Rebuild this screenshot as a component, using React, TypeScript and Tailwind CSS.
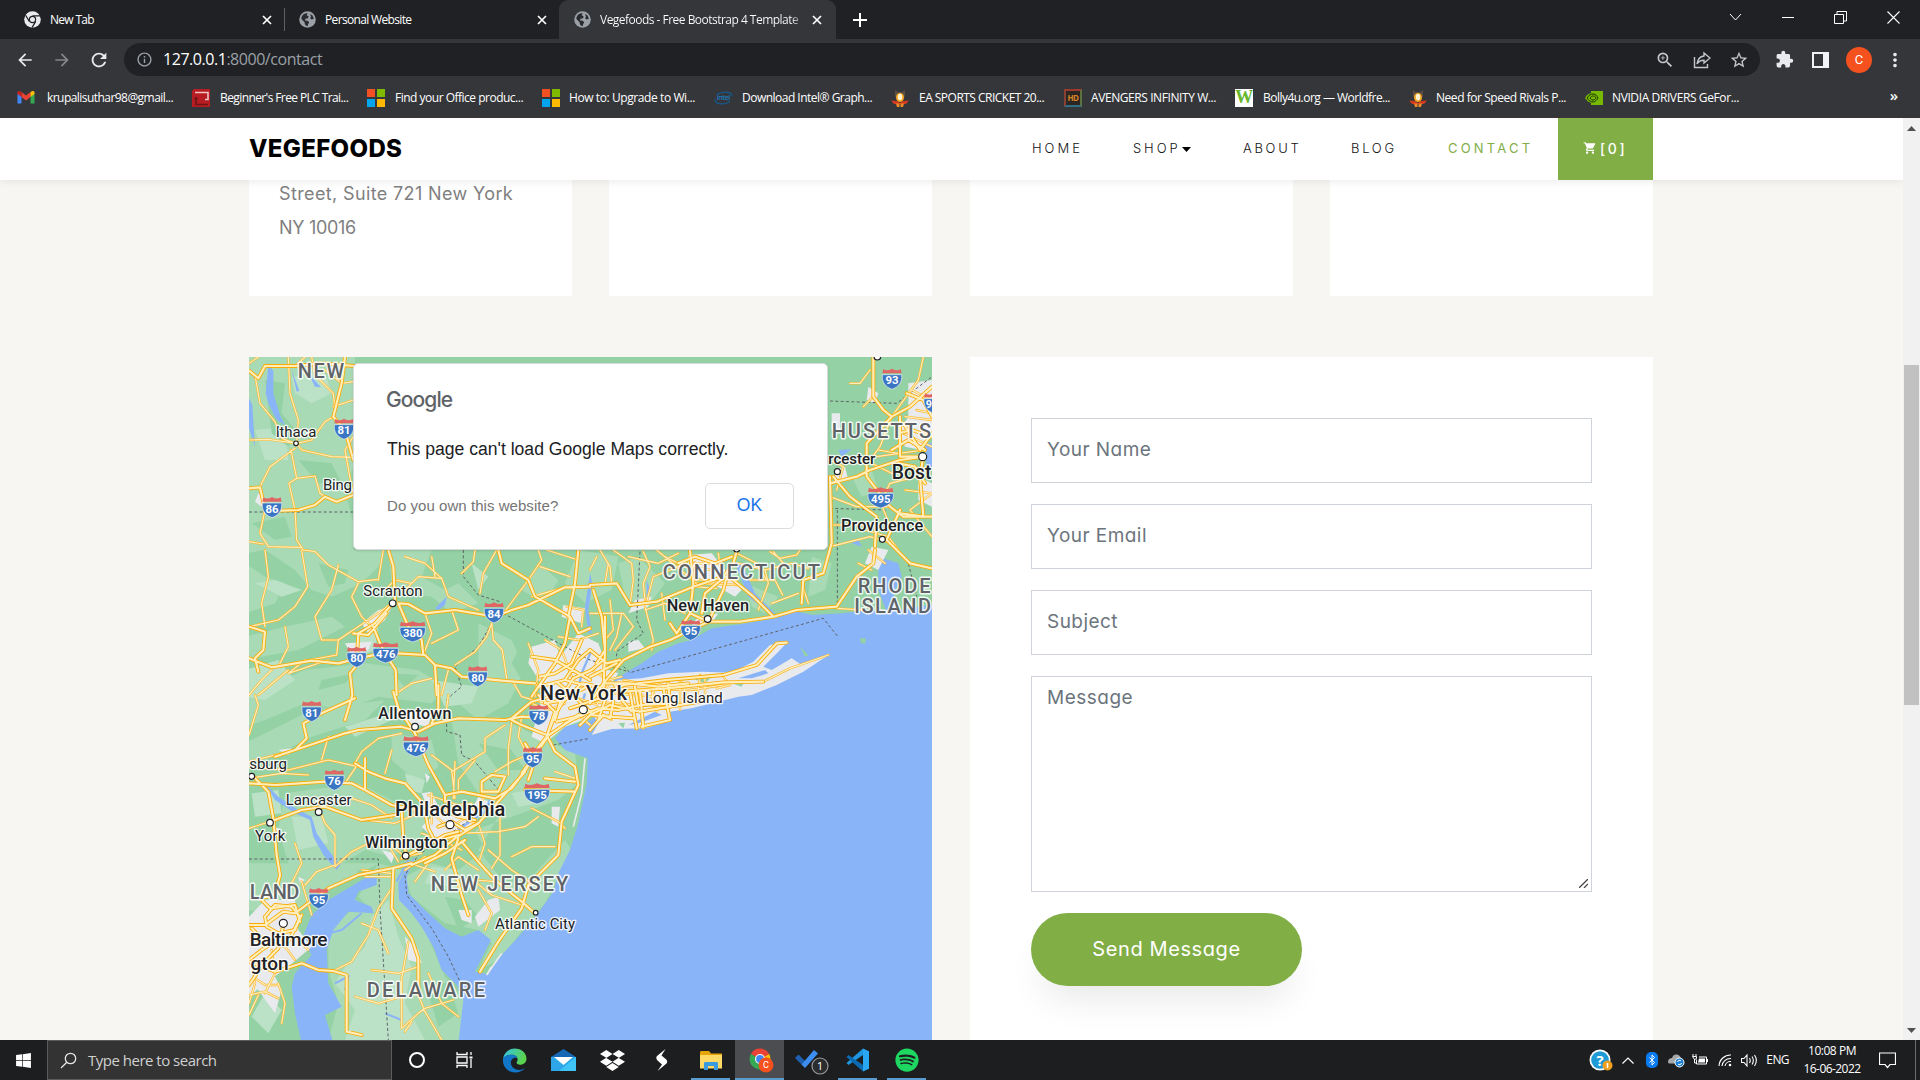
import type { ReactNode } from 'react';
import {
  MdArrowBack,
  MdArrowForward,
  MdExtension,
  MdMoreVert,
  MdOutlineInfo,
  MdRefresh,
  MdShoppingCart,
  MdStarBorder,
  MdZoomIn,
} from 'react-icons/md';
import { FaDropbox, FaSpotify, FaWindows } from 'react-icons/fa';

/* ---------- shared icons ---------- */

function Globe() {
  return (
    <svg viewBox="0 0 17 17" className="size-[17px] shrink-0">
      <circle cx="8.5" cy="8.5" r="8.3" fill="#9aa0a6" />
      <path
        d="M3 5.2C4 3 6 2 8.6 2.2L7.8 4.4l1.8.8-.6 2-2.6.6-.4 1.6 2.8.4 1.4 1.6-1 1.6-.6 2.2c-2-.2-3-2-3-4L3.4 9 2.2 7.4zM11 3l2.6 1.6 1.2 3.2-2 .8-1.6-1.2.8-1.8z"
        fill="#292b2f"
      />
    </svg>
  );
}

function ChromeMono() {
  return (
    <svg viewBox="0 0 17 17" className="size-[17px] shrink-0">
      <circle cx="8.5" cy="8.5" r="8.3" fill="#e8eaed" />
      <circle cx="8.5" cy="8.5" r="3.7" fill="#202124" />
      <circle cx="8.5" cy="8.5" r="2.5" fill="#e8eaed" />
      <path d="M8.5 4.8H16M5.3 10.4 1.6 4.2M11.7 10.4 8 16.6" stroke="#202124" strokeWidth="1.2" />
    </svg>
  );
}

function Cross() {
  return (
    <svg viewBox="0 0 10 10" className="size-[10px] shrink-0">
      <path d="M1 1l8 8M9 1L1 9" stroke="#fff" strokeWidth="1.7" />
    </svg>
  );
}

function Gmail() {
  return (
    <svg viewBox="0 0 18 14" className="h-[15px] w-[18px]">
      <path d="M0.5 13V2.5L4.5 5.5V13z" fill="#4285f4" />
      <path d="M13.5 13V5.5l4-3V13z" fill="#34a853" />
      <path d="M4.5 1.5 9 5l4.5-3.5v5L9 10 4.5 6.5z" fill="#ea4335" />
      <path d="M.5 3.4V2C.5.6 2.2-.2 4.5 1.5v5z" fill="#c5221f" />
      <path d="M17.5 3.4V2c0-1.4-1.7-2.2-4-.5v5z" fill="#fbbc04" />
    </svg>
  );
}

function Plc() {
  return (
    <svg viewBox="0 0 18 18" className="size-[18px]">
      <path d="M2 0h16v18H0V2z" fill="#b71c22" />
      <path d="M3 3.5h13v7h-3" stroke="#efc4c4" strokeWidth="1.6" fill="none" />
      <path d="M4 9.500v6h12" stroke="#6d1416" strokeWidth="1.600" fill="none" />
      <circle cx="4" cy="9.500" r="1.600" fill="#6d1416" />
    </svg>
  );
}

function Microsoft() {
  return (
    <span className="grid size-[18px] grid-cols-2 gap-[2px]">
      <i className="bg-[#f25022]" />
      <i className="bg-[#7fba00]" />
      <i className="bg-[#00a4ef]" />
      <i className="bg-[#ffb900]" />
    </span>
  );
}

function Intel() {
  return (
    <svg viewBox="0 0 20 14" className="h-[14px] w-[19px]">
      <path d="M3 3.500C8-.5 19-.5 19 5.500M17 10C12 14.500 1 14.500 1 8" fill="none" stroke="#14588f" strokeWidth="1.300" />
      <text x="9.800" y="9.600" fontSize="7.500" fontWeight="600" textAnchor="middle" fill="#1b7cc0" fontFamily="Open Sans">
        intel
      </text>
    </svg>
  );
}

function Chef() {
  return (
    <svg viewBox="0 0 18 18" className="size-[18px]">
      <path d="M4 1l3 2h4l3-2v7H4z" fill="#5a4d42" />
      <ellipse cx="9" cy="8.5" rx="4" ry="4.6" fill="#f5a623" />
      <ellipse cx="9" cy="8" rx="2.2" ry="3.2" fill="#fff3d0" />
      <path d="M0 11.500l6 .5 3 2 3-2 6-.5-3 3.500H3z" fill="#d23b1e" />
      <path d="M5 14.500h3.500V18H6zM9.500 14.500H13L12 18H9.500z" fill="#f08a24" />
    </svg>
  );
}

function Hd() {
  return (
    <span className="flex size-[18px] items-center justify-center border-2 border-t-[#9c3b2d] border-r-[#5c7340] border-b-[#2f6f86] border-l-[#8b4034] bg-[#2c2622] text-[8px] font-bold text-[#d98324]">
      HD
    </span>
  );
}

function Bolly() {
  return (
    <span className="flex size-[18px] items-center justify-center overflow-hidden bg-white font-['Liberation_Serif',serif] text-[18px] font-bold text-[#67b72c]">
      W
    </span>
  );
}

function Nvidia() {
  return (
    <svg viewBox="0 0 18 14" className="h-[14px] w-[18px]">
      <path d="M6 0h12v14H6z" fill="#76b900" />
      <path d="M0 7c2-4 5-5 8-5 4 0 6 3 7 5-2 3-4 5-7 5-4 0-6-2-8-5z" fill="#76b900" />
      <path
        d="M2 7c2-3 4-4 6-4 3 0 4 2 5 4-1 2-3 4-5 4S4 10 2 7zm3 0c1-1.500 2-2 3.500-2 1.500 0 2 1 2.500 2-1 1.200-1.500 2-3 2S6 8.500 5 7z"
        fill="none"
        stroke="#1f3300"
        strokeWidth="1"
      />
    </svg>
  );
}

/* ---------- browser chrome ---------- */

function TabStrip() {
  return (
    <div className="flex h-[39px] bg-[#202124] text-[12px] text-white">
      <div className="flex w-[284px] items-center pl-6">
        <ChromeMono />
        <span className="ml-[9px] w-[212px] tracking-[-0.7px]">New Tab</span>
        <Cross />
      </div>
      <div className="flex w-[275px] items-center">
        <i className="h-[23px] w-px bg-[#5f6165]" />
        <span className="ml-[14px] flex">
          <Globe />
        </span>
        <span className="ml-[9px] w-[212px] tracking-[-0.66px]">Personal Website</span>
        <Cross />
      </div>
      <div className="flex w-[277px] items-center rounded-t-[9px] bg-[#35363a] pl-[15px]">
        <Globe />
        <span className="ml-[9px] w-[212px] bg-gradient-to-r from-white from-90% to-[#55565a] to-96% bg-clip-text tracking-[-0.52px] whitespace-nowrap text-transparent">
          Vegefoods - Free Bootstrap 4 Template
        </span>
        <Cross />
      </div>
      <div className="flex items-center pl-[17px]">
        <svg viewBox="0 0 14 14" className="size-[14px]">
          <path d="M7 0v14M0 7h14" stroke="#fff" strokeWidth="2" />
        </svg>
      </div>
      <div className="ml-auto flex h-[34px] items-center gap-10 pr-5">
        <svg viewBox="0 0 13 8" className="h-[8px] w-[13px]">
          <path d="M1 1l5.5 6L12 1" stroke="#fff" fill="none" />
        </svg>
        <i className="h-px w-3 bg-white" />
        <svg viewBox="0 0 13 13" className="size-[13px]">
          <path d="M.5 3.5h9v9h-9zM3 3V.5h9.5v9.5H10" stroke="#fff" fill="none" />
        </svg>
        <svg viewBox="0 0 13 13" className="size-[13px]">
          <path d="M.5.5l12 12M12.5.5l-12 12" stroke="#fff" strokeWidth="1.1" />
        </svg>
      </div>
    </div>
  );
}

function Toolbar() {
  return (
    <div className="flex h-[41px] items-center bg-[#35363a] text-[#e8eaed]">
      <div className="flex w-[124px] items-center pl-[15px]">
        <MdArrowBack className="size-[20px]" />
        <MdArrowForward className="ml-[17px] size-[20px] text-[#85878a]" />
        <MdRefresh className="ml-[16px] size-[22px]" />
      </div>
      <div className="flex h-[33px] w-[1636px] items-center rounded-full bg-[#202124] pr-[11px] pl-[12px]">
        <MdOutlineInfo className="size-[17px] text-[#9aa0a6]" />
        <span className="ml-[10px] pb-px text-[16px] tracking-[-0.46px] text-[#9aa0a6]">
          <span className="text-white">127.0.0.1</span>:8000/contact
        </span>
        <span className="ml-auto flex items-center gap-[18px] text-[#c4c7cb]">
          <MdZoomIn className="size-[20px]" />
          <svg viewBox="0 0 18 18" className="size-[18px]" fill="none" stroke="currentColor" strokeWidth="1.4">
            <path d="M1.500 6v10.500h13V13" />
            <path d="M11 2l6 5-6 5V9.300C7.500 9.300 5.500 10.500 4 13c.5-4 3-7.500 7-8z" />
          </svg>
          <MdStarBorder className="size-[20px]" />
        </span>
      </div>
      <MdExtension className="ml-[15px] size-[19px]" />
      <svg viewBox="0 0 17 16" className="ml-[18px] h-[16px] w-[17px]">
        <path d="M1 1h15v14H1z" fill="none" stroke="#f1f3f4" strokeWidth="2" />
        <path d="M11 1h5v14h-5z" fill="#f1f3f4" />
      </svg>
      <span className="ml-[17px] flex size-[26px] items-center justify-center rounded-full bg-[#f4511e] font-['Roboto',sans-serif] text-[13px] text-white">
        C
      </span>
      <MdMoreVert className="ml-[12px] size-[22px]" />
    </div>
  );
}

type Bookmark = { label: string; icon: ReactNode; box: string };

const bookmarks: Bookmark[] = [
  { label: 'krupalisuthar98@gmail...', icon: <Gmail />, box: 'w-[175px] gap-3 tracking-[-0.55px]' },
  { label: "Beginner's Free PLC Trai...", icon: <Plc />, box: 'w-[175px] gap-[10px] tracking-[-0.6px]' },
  { label: 'Find your Office produc...', icon: <Microsoft />, box: 'w-[175px] gap-[10px] tracking-[-0.5px]' },
  { label: 'How to: Upgrade to Wi...', icon: <Microsoft />, box: 'w-[172px] gap-[9px] tracking-[-0.41px]' },
  { label: 'Download Intel® Graph...', icon: <Intel />, box: 'w-[177px] gap-[9px] tracking-[-0.51px]' },
  { label: 'EA SPORTS CRICKET 20...', icon: <Chef />, box: 'w-[173px] gap-[10px] tracking-[-0.52px]' },
  { label: 'AVENGERS INFINITY W...', icon: <Hd />, box: 'w-[171px] gap-[9px] tracking-[-0.42px]' },
  { label: 'Bolly4u.org — Worldfre...', icon: <Bolly />, box: 'w-[174px] gap-[10px] tracking-[-0.52px]' },
  { label: 'Need for Speed Rivals P...', icon: <Chef />, box: 'w-[176px] gap-[9px] tracking-[-0.45px]' },
  { label: 'NVIDIA DRIVERS GeFor...', icon: <Nvidia />, box: 'w-[170px] gap-[9px] tracking-[-0.39px]' },
];

function BookmarkBar() {
  return (
    <div className="flex h-[38px] items-center border-b border-[#3d3336] bg-[#35363a] pr-[22px] pb-[2px] pl-[17px] text-[12px] text-white">
      {bookmarks.map((b) => (
        <div key={b.label} className={'flex shrink-0 items-center whitespace-nowrap ' + b.box}>
          {b.icon}
          <span>{b.label}</span>
        </div>
      ))}
      <span className="ml-auto pb-1 text-[15px] font-semibold">»</span>
    </div>
  );
}

/* ---------- map ---------- */

type Group = { dx: number; dy: number; major: string; minor: string };

const roads: Group[] = [
  {
    dx: 0,
    dy: 0,
    major:
      'M12 62L40 85L60 48L150 48L230 40L330 48M300 21L290 100L265 200L300 240L325 330M12 415L45 412L60 480L110 482L160 480L210 465L240 440L275 455L325 435M430 600L445 650L450 750L430 775L390 820L340 850L335 940M12 830L60 845L55 900L30 925L40 965M12 925L80 952L200 932L280 940L340 925L420 908L540 915L570 945L620 955L650 980L770 992L870 1000M460 760L490 762L540 790L630 780L750 800L800 780L850 765L960 712L1035 710M460 760L490 830L530 870L535 915M760 600L770 640L850 690L870 740L975 800L960 880L930 940L880 1010L860 1040M1000 600L990 700L970 800M340 940L315 970L322 1035L300 1110M420 910L452 960L455 1035M570 945L575 1035M385 830L405 880L420 908M325 850L370 855L425 790M1035 835L1000 850L975 800M960 990L1000 930L1035 900M860 920L930 930L1035 990M880 1010L960 990L1035 1010',
    minor:
      'M12 60L30 75L45 160L90 215L110 265L150 280M130 21L135 130L160 210L155 280M12 270L70 268L155 280L200 270L240 215L265 200M155 280L170 300L260 320L325 322M150 295L75 350L45 410M138 300L155 385M155 385L210 378L225 430L240 440M155 385L132 400L150 480L155 570M60 480L45 550L70 590L170 592M12 575L55 582M155 570L175 600L210 605L250 645L340 695L400 688M170 600L188 710L150 770L100 810L12 830M415 600L400 690M340 700L320 740L350 800L380 830M440 760L400 790L280 870L275 915L80 952M480 720L520 680L590 685L610 740L700 780M690 600L685 635L650 670M755 600L715 670L705 730M740 820L725 860L690 905L630 945M740 820L745 870L772 900L785 985M775 790L850 690L890 630L880 600M12 1035L50 990L80 960M455 1030L500 1000L560 985M200 21L210 75L265 130L270 180M265 170L325 150M325 260L300 300L318 400L325 430M40 21L12 40M180 21L150 48M240 60L290 100L325 95M885 650L975 680M610 960L590 1035M860 740L960 712M905 600L1000 630M130 960L40 1035M180 930L130 970L250 930',
  },
  {
    dx: 1035,
    dy: 0,
    major:
      'M300 600L310 700L300 790L355 815L450 815L550 800L620 780L740 770M0 705L80 700L120 765L200 755L310 710L400 680L430 640L440 605M355 815L240 870L180 890L100 930L40 1000L0 1060M45 800L45 900L40 1035M430 690L490 740L550 800M640 690L635 760M720 380L725 580L700 670L640 690M720 400L800 380L840 360L930 330L1000 320M850 21L850 140L880 180L905 200L960 170L1026 110M1000 320L930 320L930 200M905 200L830 280L830 380L900 470L940 500L1026 500M730 380L780 440L860 500L855 590M855 600L850 640L800 680L740 770M930 480L890 570L960 640L1026 655M1000 320L990 380L1000 500L930 490M355 815L400 720L410 680M10 720L35 800L45 900L20 940M950 130L1000 150L1026 200M940 220L990 300L1026 250M240 820L260 850L300 790M0 900L50 940L90 930M0 980L80 940',
    minor:
      'M720 590L840 560L890 575M720 525L840 525M820 780L740 775M30 600L60 650L65 700M70 600L125 640L130 690L120 765M160 605L180 650L160 700L165 750M290 640L190 680L170 755M200 600L320 700M0 790L100 790L130 830L75 900M165 770L190 870L185 900M310 690L440 690M480 690L555 690L578 735M540 605L570 625L620 615L630 600M440 610L500 640L530 690M380 640L300 640M1000 21L985 90L905 200M840 60L810 100L780 100M850 140L820 170M720 440L800 470L900 470M740 420L760 350L700 320M860 320L1000 300M980 380L900 400L880 440M1026 430L960 480L1026 560M20 620L0 660M95 790L80 860L60 900M310 710L380 715M60 750L70 840L45 870M980 180L1026 190M940 250L1026 290M905 200L870 290L840 330M550 605L580 640',
  },
  {
    dx: 0,
    dy: 1035,
    major:
      'M12 265L90 270L240 260L320 265L360 285L440 330L540 350M90 185L150 165L300 115L340 105L470 95L520 110L570 85L640 70L780 75L830 65L900 70M150 165L185 130L175 85L230 55L330 10M445 -10L460 40L480 70L510 115L550 210L600 300L600 320M580 -30L580 40L560 85M30 250L70 290L85 370L95 480L105 540L90 600L45 610M75 380L170 345L240 335L350 375L450 360M360 190L360 280M330 205L370 230L420 250L480 265L530 320L560 350M600 300L650 290L700 300L750 310L800 280L845 220L870 170L905 125M500 510L570 480L630 430L700 385L750 330L840 230M470 490L530 460L600 420L640 410M12 690L60 690L115 650L150 655L250 580L340 540L440 520L500 505M445 520L440 640L500 730L520 790L520 900M640 430L620 490L650 600L670 660M650 440L700 500L750 555L830 620L870 655M905 120L930 170L990 215L1000 270L950 380L940 480L880 540L850 570L830 640L760 740L705 830M905 120L830 90L800 75M900 250L990 260M840 285L990 290M12 800L90 830L170 805L220 825L265 828L305 840L305 1010L350 1020M905 125L930 60L960 10L1035 -30M905 125L1000 60L1035 50M880 0L930 50L905 125M800 70L860 20L930 0M20 700L60 740L130 740L170 660M45 610L75 640L150 630L165 680M12 870L60 800L100 760L115 690M710 260L740 240L780 245L760 290L710 290L710 260M470 350L475 430L485 490M540 350L550 400L570 440L640 420',
    minor:
      'M12 215L130 225L250 195L340 215M190 240L110 235L12 250M12 400L75 380M230 360L240 385L270 420L270 510L215 530L180 570M270 515L320 470L360 450L460 450M320 310L380 330L440 370M360 375L450 385L530 350M330 205L350 170L400 130L470 115M150 165L12 200M12 120L40 30L30 0M300 265L340 205M440 580L400 640L370 720L320 800L265 828M490 740L470 850L470 1000L520 955L540 940L625 915M520 900L540 950L590 1035M480 1010L500 980M630 200L625 310M720 130L720 170L620 230M800 80L790 160L790 240M560 180L620 225L630 310M765 330L765 480L740 520M560 490L510 560M510 510L570 530M590 340L700 390M720 130L780 90M610 0L600 80M750 560L690 555M690 560L740 600L830 630M930 230L990 250M940 380L960 400M550 300L640 330M620 350L700 340L720 300M570 360L610 400L660 370M170 560L200 660M12 900L60 890L100 910M30 850L60 870L100 870M12 960L40 900M350 525L440 535M360 545L440 545M430 450L460 500M860 340L940 380M1000 60L1035 90M870 170L800 200L750 230',
  },
  {
    dx: 1035,
    dy: 1035,
    major:
      'M-30 90L0 60L60 30L150 50L240 35L330 20M0 105L40 60L60 70L70 20M140 100L120 -10M160 98L150 -10M155 95L240 75L220 -20M-60 40L30 10L100 -30L230 -45L400 -60L500 -90L560 -155L590 -157M100 -10L230 -20L400 -38L520 -40M0 60L130 70M-100 80L-20 60',
    minor:
      'M520 -40L600 -80L715 -120M0 20L140 30L240 20M60 -20L300 -15L400 -30M100 -45L180 -30L260 -50M190 -20L200 50M270 -40L270 45M330 -60L320 20M-60 0L20 30L60 -40M400 -55L420 -30L380 -20',
  },
  {
    /* city street webs: New York, Philadelphia, Baltimore, Boston, Hartford */
    dx: 0,
    dy: 0,
    major:
      'M930 1110L950 1040L985 985L1040 960L1075 930M900 1060L960 1050L1010 1000L1060 1010M960 1120L1000 1100L1060 1075L1120 1080L1190 1065L1260 1062M1060 1010L1080 1050L1060 1110M1110 1005L1130 1050L1160 1085M940 1000L990 1040L1040 1090M885 980L930 970L980 940L1010 870M1080 1000L1150 1000L1240 1010L1330 1000M1170 1010L1180 1070M1270 1000L1275 1070M580 1430L620 1415L660 1440L700 1420M600 1380L640 1400L690 1410M540 1540L600 1510L660 1470M60 1700L90 1665L140 1670L165 1700L150 1740L100 1750L65 1730L60 1700M12 1830L50 1800L80 1780L110 1750M1960 250L2000 240L2061 260M1940 300L1990 270L2040 300M1960 340L2010 350L2040 400M1300 640L1350 620L1410 640L1460 620M1330 680L1350 640M1370 790L1380 730L1440 680M840 1180L870 1230L850 1290M830 1270L905 1165',
    minor:
      'M850 880L880 960L870 1040M900 870L950 900L980 980M860 1060L910 1080L960 1060M1040 960L1090 990L1130 980M1090 1030L1230 1040M1100 1060L1100 1110M1220 1000L1225 1070M1310 990L1330 1060M1380 985L1380 1050M940 860L1000 870L1060 850M965 770L1015 780L1010 830M800 990L830 1040L900 1060M540 1380L600 1370L680 1360M530 1450L590 1470L650 1500M560 1330L560 1420M700 1420L720 1480L700 1540M480 1560L540 1520M640 1450L760 1445L840 1430L880 1400M600 1560L640 1520L700 1560M430 1480L480 1520L530 1510M30 1770L120 1790L150 1830M12 1760L60 1770M80 1800L90 1870L60 1930M20 1820L30 1900L12 1960M150 1760L190 1800M100 1900L120 1960L110 2020M2000 120L2061 150M1980 200L2061 210M1900 300L1960 310M1880 340L1940 370L2000 360M1980 420L2061 430M1900 440L1940 540M1860 540L1930 560L1960 600M1870 600L1920 640M1840 640L1880 660M1260 620L1320 650L1400 660M1420 610L1430 680M1350 700L1480 705M1480 640L1560 660L1640 640L1690 655M1560 660L1570 700L1540 780M1670 700L1690 760M1150 620L1240 640L1300 610M1080 700L1090 640M1200 780L1260 760L1320 790M1250 730L1260 810M1580 760L1660 730M500 700L450 690L420 720M540 790L560 850L535 915M620 780L640 840L560 880M280 645L260 720L210 800L230 870L280 870M60 600L70 680L50 760L60 830M100 950L130 890L120 830M560 620L570 680M480 620L540 640L590 685M830 1100L820 1160L840 1200M690 1230L640 1290L640 1330M440 1200L420 1270M250 1160L230 1230M150 1480L170 1540L140 1600M800 1520L860 1490L930 1490M730 1500L800 1560L860 1600M700 1620L740 1690L720 1740M380 1860L460 1870L520 1850M330 1940L400 1960L470 1940M550 1870L590 1960L640 2000M350 1720L400 1740L430 1810',
  },
];

const borders =
  'M12 486H325M655 600V680L700 735L765 755M775 790L960 890L1035 930L1150 965M740 820L700 890L630 950L650 1010L620 1035L605 1050V1145L645 1155L650 1215L690 1235L765 1325L750 1350L660 1420L520 1515L480 1575L485 1635L560 1735L610 1820L645 1895M1755 153L1955 160L1995 130L2061 80M1755 475L1920 480L1930 580L1990 640L2015 740M1777 480V760M1185 605L1175 810L1195 850L1115 905V930L1155 968L1735 805L1780 862M12 1527H400L405 1675L430 2070M925 1185L1035 1165';

type LabelProps = { x: number; y: number; w?: number; children: string; size?: number; bold?: boolean; end?: boolean };

function Label({ x, y, w, children, size = 45, bold = false, end = false }: LabelProps) {
  return (
    <text
      x={x}
      y={y}
      textLength={w}
      fontSize={size}
      fontWeight={bold ? 500 : 400}
      textAnchor={end ? 'end' : 'start'}
      fill="#202124"
      stroke="#fff"
      strokeWidth="8"
      strokeOpacity="0.85"
      strokeLinejoin="round"
      paintOrder="stroke"
    >
      {children}
    </text>
  );
}

function StateLabel({ x, y, w, children, end = false }: LabelProps) {
  return (
    <text
      x={x}
      y={y}
      textLength={w}
      lengthAdjust="spacing"
      fontSize="60"
      fontWeight="500"
      textAnchor={end ? 'end' : 'start'}
      fill="#5f6368"
      stroke="#fff"
      strokeWidth="9"
      strokeOpacity="0.85"
      strokeLinejoin="round"
      paintOrder="stroke"
    >
      {children}
    </text>
  );
}

const shields: [number, number, string][] = [
  [297, 238, '81'],
  [81, 473, '86'],
  [503, 846, '380'],
  [422, 909, '476'],
  [335, 922, '80'],
  [698, 980, '80'],
  [747, 789, '84'],
  [1941, 88, '93'],
  [1907, 444, '495'],
  [1337, 841, '95'],
  [200, 1085, '81'],
  [513, 1190, '476'],
  [268, 1291, '76'],
  [221, 1646, '95'],
  [881, 1096, '78'],
  [863, 1223, '95'],
  [876, 1332, '195'],
];

const towns: [number, number, number][] = [
  [153, 280, 7],
  [443, 760, 10],
  [1777, 365, 9],
  [2033, 320, 12],
  [1912, 568, 9],
  [1388, 807, 10],
  [1897, 20, 10],
  [1475, 597, 9],
  [1015, 1079, 12],
  [510, 1130, 10],
  [20, 1279, 9],
  [221, 1386, 10],
  [75, 1418, 10],
  [615, 1424, 12],
  [482, 1517, 10],
  [115, 1720, 12],
  [872, 1688, 7],
];

const roadLayer = (kind: 'major' | 'minor', stroke: string, width: number) =>
  roads.map((g, i) => (
    <path
      key={i}
      d={g[kind]}
      transform={`translate(${g.dx} ${g.dy})`}
      fill="none"
      stroke={stroke}
      strokeWidth={width}
      strokeLinejoin="round"
      strokeLinecap="round"
    />
  ));

function Shield({ x, y, text }: { x: number; y: number; text: string }) {
  const w = text.length > 2 ? 38 : 29;
  return (
    <g transform={`translate(${x} ${y})`}>
      <path
        d={`M${-w} -14C${-w - 2} 8 ${-w + 8} 22 0 30C${w - 8} 22 ${w + 2} 8 ${w} -14z`}
        fill="#3a75c4"
        stroke="#e8f0fb"
        strokeWidth="2"
      />
      <path d={`M${-w + 3} -31Q${-w / 2} -23 0 -32Q${w / 2} -23 ${w - 3} -31L${w} -18H${-w}z`} fill="#e06666" />
      <text y="15" fontSize="34" fontWeight="700" textAnchor="middle" fill="#fff">
        {text}
      </text>
    </g>
  );
}

function MapArt() {
  return (
    <svg viewBox="12 21 2049 2049" className="block size-[683px]" fontFamily="Roboto, sans-serif">
      <rect x="0" y="0" width="2080" height="2080" fill="#94d2a5" />

      {/* lighter vegetation */}
      <g fill="#a8dab5">
        <path d="M0 0H330V340L300 420L325 520V600H420L400 650L350 700L260 740L200 720L150 660L60 600L0 610z" />
        <path d="M430 600H560L530 680L600 720L640 700L700 760L620 790L560 740L480 730L440 700zM0 640L60 680L120 700L90 760L0 790zM0 860L120 830L260 800L300 830L160 900L0 930zM180 960L360 940L520 960L600 1010L560 1060L400 1040L300 1080L180 1060L60 1110L0 1130V1040z" />
        <path d="M700 820L800 870L840 960L790 1060L700 1110L640 1060L700 1000zM1000 600L1120 620L1100 720L1020 760L960 700zM880 640L940 690L900 760L830 720z" />
        <path d="M0 1180L200 1080L420 1050L360 1110L200 1160L60 1230L0 1250zM120 1330L340 1300L480 1370L560 1380L520 1470L440 1520L360 1500L260 1560L130 1540L100 1440zM0 1540H400L350 1570L240 1620L140 1700L0 1680z" />
        <path d="M620 1110L760 1100L900 1170L990 1210L1000 1300L940 1350L800 1400L690 1440L720 1500L640 1560L560 1540L480 1580L500 1640L600 1720L700 1740L740 1780L700 1860L760 1830L900 1660L980 1500L960 1470L860 1580L780 1600L700 1500L760 1400L700 1330L640 1240z" />
        <path d="M440 1150L560 1170L580 1250L520 1300L440 1230z" />
        <path d="M400 1540L470 1560L480 1640L540 1740L600 1880L660 1950V2070H250L280 1960L250 1860V1740L320 1680L390 1690L340 1640z" />
        <path d="M1120 640L1180 620L1260 700L1200 780L1140 740zM1700 620L1760 640L1740 720L1690 740zM1820 380L1880 360L1900 420L1850 440zM1500 700L1600 740L1560 790L1520 770z" />
      </g>
      <g fill="#bbe2c6">
        <path d="M140 80L240 70L260 130L200 160L150 130zM30 240L120 230L130 330L60 330zM30 700L90 690L170 720L110 740zM0 960L100 930L150 990L60 1050L0 1040zM680 640L730 680L700 720zM340 860L400 830L390 900L340 920z" />
        <path d="M560 990L700 1010L680 1060L600 1070zM300 1130L460 1080L440 1110L330 1160zM20 1330L100 1320L110 1390L30 1400zM140 1400L230 1400L250 1480L160 1500zM480 1270L540 1290L530 1330L490 1320zM800 1330L900 1310L880 1360L820 1370z" />
        <path d="M380 1700L430 1650L460 1760L500 1850L480 1960L540 2070H300L330 1980L270 1900L300 1850L360 1790zM60 1930L110 1980L70 2050L20 2000zM560 1550L640 1560L620 1610L540 1600z" />
      </g>
      <g fill="#94d2a5">
        <path d="M60 90L120 100L110 190L160 250L130 290L80 250zM160 330L260 340L290 400L220 400zM20 520L120 500L140 560L90 570zM220 640L310 660L300 700L250 710zM600 1640L660 1650L700 1700L640 1740zM540 1900L610 1900L640 1990L580 2030zM340 1560L380 1560L330 1620z" />
        <path d="M230 990L330 970L300 1000L220 1020zM440 970L520 975L480 1010zM820 900L860 960L830 990L800 940zM700 1180L800 1200L840 1260L760 1260z" />
      </g>

      {/* ocean and sounds */}
      <g fill="#8ab4f8">
        <path d="M1115 985L1190 940L1240 905L1300 880L1340 870L1400 835L1490 822L1590 805L1640 780L1700 795L1790 790L1860 782L1930 785L2080 760V2080H640L655 1950L635 1905L590 1860L565 1790L530 1730L500 1690L462 1650L460 1600L490 1540L510 1520L485 1580L490 1630L540 1680L600 1735L650 1760L700 1740L738 1770L690 1865L725 1872L775 1810L825 1755L875 1695L925 1625L940 1570L975 1500L1000 1420L1025 1300L1028 1225L960 1200L930 1165L960 1130L1040 1110L1060 1060z" />
        <path d="M395 1580L360 1585L300 1620L250 1650L200 1695L170 1770L200 1815L150 1870L140 1910L150 1990L170 2080H265L240 1995L290 1970L250 1900L245 1800L265 1740L310 1685L385 1690L380 1670L330 1650L340 1625L395 1605z" />
        <path d="M70 45L85 62L85 130L105 195L120 225L95 210L70 160L62 130zM12 145L22 165L30 290L12 235zM140 60L163 122L155 125zM190 70L228 112L210 110zM570 775L605 740L600 765L580 780z" />
        <path d="M60 1300L100 1340L160 1380L200 1400L215 1450L250 1500L285 1545L275 1560L235 1515L205 1460L195 1410L150 1390L90 1350zM1900 620L1960 640L1970 680L1945 730L1960 785L1925 785L1900 720zM1820 580L1840 570L1850 590zM1470 640L1490 640L1530 730L1590 790L1580 795L1510 740zM1035 670L1042 700L1030 780L1040 850L1030 850L1020 770zM1205 690L1215 720L1205 760zM1780 300L1820 298L1790 320zM2040 280H2070V350H2045z" />
      </g>
      <path d="M250 1750L290 1740L350 1690M270 1900L310 1880L300 1920M150 1990L180 2000L160 2030M420 1990L470 2010" stroke="#8ab4f8" strokeWidth="6" fill="none" />
      <path d="M1665 890L1690 915L1680 920zM1845 865H1862V880H1848z" fill="#94d2a5" />

      {/* Long Island */}
      <path
        d="M1080 1010L1120 990L1190 985L1270 970L1370 965L1460 968L1525 935L1575 885L1628 875L1600 905L1555 950L1580 960L1640 925L1670 945L1755 912L1675 965L1595 1005L1520 1035L1480 1040L1420 1055L1340 1075L1275 1085L1280 1110L1200 1135L1100 1137L1040 1155L1060 1120L1040 1090z"
        fill="#e8eaed"
      />
      <path d="M1120 1120L1140 1118L1135 1135zM1340 985L1400 980L1380 1000zM1460 1000L1500 990L1490 1010z" fill="#94d2a5" />
      <path d="M1150 1125L1230 1085L1250 1095L1180 1120zM1480 985L1560 960L1570 970L1520 985z" fill="#8ab4f8" />

      {/* urban areas */}
      <g fill="#e8eaed">
        <path d="M860 890L930 870L945 920L1000 850L1060 880L1090 960L1120 970L1080 1030L1040 1100L960 1130L900 1180L860 1160L880 1080L900 1020L850 940zM955 765L1020 775L1010 820L950 800z" />
        <path d="M350 820L400 780L440 770L420 810L370 850zM300 880L380 875L370 900L320 915zM40 430L60 450L50 470L30 455zM1330 615L1400 610L1440 660L1490 720L1470 740L1400 700L1330 670zM1360 800L1420 790L1400 820L1340 825zM1170 750L1220 740L1210 770L1150 790zM1150 875L1180 870L1200 895L1150 905z" />
        <path d="M1880 590L1930 600L1900 660L1860 640zM1990 100L2061 90V250L2030 300L1980 290L1960 250L1990 200zM1760 190L1785 190V240H1760zM1770 360L1800 350L1810 390L1770 390zM1870 110L1900 130L1890 160L1865 150zM2020 380L2061 400V470L2020 450z" />
        <path d="M530 1330L560 1325L580 1370L680 1380L700 1340L740 1360L700 1400L680 1440L620 1470L560 1460L530 1430L560 1400zM480 1080L560 1090L550 1130L490 1120zM100 1200L140 1195L130 1215zM920 1370L945 1370L940 1430L920 1420zM730 1650L760 1640L765 1680L700 1730L690 1700zM640 1680L680 1680L680 1720L650 1710z" />
        <path d="M60 1650L150 1650L160 1740L200 1790L130 1850L60 1900L12 1940V1700zM12 1860L80 1860L110 1920L90 1990L40 1920zM90 1430L110 1440L95 1470zM160 1580L180 1590L165 1600zM410 1500L450 1510L440 1540zM480 1760L520 1800L530 1840L490 1830zM540 1270L555 1280L545 1300z" />
      </g>
      <path d="M1020 1225L1010 1330L985 1430M770 1810L725 1875L740 1850" stroke="#e8eaed" strokeWidth="5" fill="none" />
      <path d="M995 1040L1010 970L1040 900M1000 1100L1020 1030M735 1350L720 1385L660 1425L620 1460M455 1595L490 1530" stroke="#8ab4f8" strokeWidth="7" fill="none" />

      <path d={borders} fill="none" stroke="#5f6368" strokeWidth="3" strokeDasharray="9 7" />

      {roadLayer('minor', '#fbb829', 7)}
      {roadLayer('minor', '#ffeec0', 3.5)}
      {roadLayer('major', '#f9ab00', 11.5)}
      {roadLayer('major', '#ffeebc', 6.5)}

      {towns.map(([x, y, r]) => (
        <circle key={x + '-' + y} cx={x} cy={y} r={r} fill="#fff" stroke="#202124" strokeWidth="3.5" />
      ))}
      {shields.map(([x, y, t]) => (
        <Shield key={x + '-' + y} x={x} y={y} text={t} />
      ))}

      {/* partially visible shield at the right edge */}
      <path d="M2037 146C2035 168 2045 182 2066 190V146z" fill="#3a75c4" stroke="#e8f0fb" strokeWidth="2" />
      <path d="M2040 130Q2052 138 2066 129V142H2037z" fill="#e06666" />
      <text x="2042" y="175" fontSize="32" fontWeight="700" fill="#fff">
        9
      </text>

      <StateLabel x={158} y={85} w={139}>NEW</StateLabel>
      <StateLabel x={1760} y={264} w={298}>HUSETTS</StateLabel>
      <StateLabel x={1253} y={686} w={472}>CONNECTICUT</StateLabel>
      <StateLabel x={1838} y={728} w={219}>RHODE</StateLabel>
      <StateLabel x={1828} y={788} w={230}>ISLAND</StateLabel>
      <StateLabel x={557} y={1624} w={413}>NEW JERSEY</StateLabel>
      <StateLabel x={14} y={1648} w={149}>LAND</StateLabel>
      <StateLabel x={365} y={1942} w={355}>DELAWARE</StateLabel>

      <Label x={92} y={262} w={122}>Ithaca</Label>
      <Label x={234} y={420} w={87}>Bing</Label>
      <Label x={355} y={738} w={178}>Scranton</Label>
      <Label x={1891} y={342} bold end>rcester</Label>
      <Label x={1940} y={388} w={119} size={58} bold>Bost</Label>
      <Label x={1788} y={543} w={247} size={49} bold>Providence</Label>
      <Label x={1265} y={783} w={247} size={49} bold>New Haven</Label>
      <Label x={885} y={1050} w={261} size={59} bold>New York</Label>
      <Label x={1200} y={1060} w={233}>Long Island</Label>
      <Label x={400} y={1107} w={219} size={48} bold>Allentown</Label>
      <Label x={126} y={1258} end>sburg</Label>
      <Label x={122} y={1365} w={198}>Lancaster</Label>
      <Label x={30} y={1472} w={91}>York</Label>
      <Label x={450} y={1397} w={331} size={60} bold>Philadelphia</Label>
      <Label x={360} y={1494} w={248} size={49} bold>Wilmington</Label>
      <Label x={14} y={1788} w={233} size={57} bold>Baltimore</Label>
      <Label x={131} y={1861} size={57} bold end>gton</Label>
      <Label x={750} y={1738} w={240}>Atlantic City</Label>
    </svg>
  );
}

function MapDialog() {
  return (
    <div className="absolute top-[6px] left-[104px] h-[187px] w-[475px] rounded-[5px] border border-[#d8dadc] bg-white pt-[22px] pr-[33px] pl-[32px] font-['Liberation_Sans',Arial,sans-serif] shadow-sm">
      <div className="font-['Inter',sans-serif] text-[21px] leading-[28px] font-medium tracking-[-0.9px] text-[#5f6368] [font-feature-settings:'cv11']">
        Google
      </div>
      <p className="mt-[23px] pl-px text-[17.6px] leading-[24px] text-[#202124]">This page can't load Google Maps correctly.</p>
      <div className="mt-[22px] flex items-center justify-between">
        <span className="pl-px text-[15px] tracking-[0.05px] text-[#757575]">Do you own this website?</span>
        <span className="flex h-[46px] w-[89px] items-center justify-center rounded-[5px] border border-[#dadce0] pb-[2px] text-[17.5px] text-[#1a73e8]">
          OK
        </span>
      </div>
    </div>
  );
}

/* ---------- site ---------- */

function SiteHeader() {
  return (
    <header className="relative z-10 flex h-[62px] items-center bg-white pr-[250px] pl-[249px] text-[13px] text-[#111] shadow-[0_0_10px_rgba(0,0,0,0.1)]">
      <div className="w-[783px] text-[24px] font-extrabold tracking-[0.35px] text-black">VEGEFOODS</div>
      <nav className="flex w-[526px] shrink-0 font-light">
        <a className="w-[101px] tracking-[3px]">HOME</a>
        <a className="flex w-[110px] items-center tracking-[2.9px]">
          SHOP
          <svg viewBox="0 0 9 5" className="ml-[2px] h-[5px] w-[9px]">
            <path d="M0 0h9L4.5 5z" fill="#000" />
          </svg>
        </a>
        <a className="w-[108px] tracking-[2.7px]">ABOUT</a>
        <a className="w-[97px] tracking-[2.7px]">BLOG</a>
        <a className="font-normal tracking-[3.2px] text-[#82ae46]">CONTACT</a>
      </nav>
      <a className="flex h-[62px] w-[95px] shrink-0 items-center bg-[#82ae46] pb-[2px] pl-[25px] text-[14px] font-medium tracking-[2.6px] text-white">
        <MdShoppingCart className="mr-[3px] size-[14px]" />
        [0]
      </a>
    </header>
  );
}

const fields = ['Your Name', 'Your Email', 'Subject'];

function ContactForm() {
  return (
    <form className="flex h-[683px] w-[683px] flex-col gap-[21px] bg-white px-[61px] pt-[61px] text-[19px] text-[#6c757d]">
      {fields.map((f) => (
        <div key={f} className="flex h-[65px] items-center border border-[#ced4da] px-[15px] tracking-[0.45px]">
          {f}
        </div>
      ))}
      <div className="relative h-[216px] border border-[#ced4da] px-[15px] pt-[7px] leading-[28px] tracking-[0.5px]">
        Message
        <svg viewBox="0 0 10 10" className="absolute right-[3px] bottom-[3px] size-[9px]">
          <path d="M0 10L10 0M5.5 10L10 5.5" stroke="#444" strokeWidth="1.4" />
        </svg>
      </div>
      <div className="flex h-[73px] w-[271px] items-center justify-center rounded-full bg-[#82ae46] pb-px text-[20px] tracking-[0.6px] text-white shadow-[0_24px_36px_-11px_rgba(0,0,0,0.09)]">
        Send Message
      </div>
    </form>
  );
}

function Page() {
  return (
    <div className="flex h-[922px] overflow-hidden">
      <main className="h-[922px] w-[1903px] overflow-hidden bg-[#f7f6f2] font-['Inter',sans-serif] [font-feature-settings:'cv11']">
        <SiteHeader />
        <section className="grid grid-cols-4 gap-x-[37.5px] pr-[250px] pl-[249px]">
          <div className="h-[116px] bg-white pl-[30px] text-[18px] leading-[34px] text-[#808080]">
            <p className="-mt-[3px] tracking-[0.37px]">Street, Suite 721 New York</p>
            <p className="tracking-[-0.3px]">NY 10016</p>
          </div>
          <div className="h-[116px] bg-white" />
          <div className="h-[116px] bg-white" />
          <div className="h-[116px] bg-white" />
        </section>
        <section className="mt-[61px] flex gap-[38px] pl-[249px]">
          <div className="relative size-[683px] shrink-0 overflow-hidden">
            <MapArt />
            <MapDialog />
          </div>
          <ContactForm />
        </section>
      </main>
      <aside className="flex w-[17px] flex-col items-center bg-[#f1f1f1]">
        <svg viewBox="0 0 9 5" className="mt-[8px] h-[5px] w-[9px]">
          <path d="M0 5h9L4.5 0z" fill="#505050" />
        </svg>
        <i className="mt-[234px] h-[340px] w-[15px] bg-[#c1c1c1]" />
        <svg viewBox="0 0 9 5" className="mt-auto mb-[7px] h-[5px] w-[9px]">
          <path d="M0 0h9L4.5 5z" fill="#505050" />
        </svg>
      </aside>
    </div>
  );
}

/* ---------- taskbar ---------- */

function TaskButton({ children, open = false, active = false }: { children: ReactNode; open?: boolean; active?: boolean }) {
  return (
    <div className={'relative flex h-10 w-[49px] items-center justify-center ' + (active ? 'bg-[#4b4d50]' : '')}>
      {children}
      {open && <i className={'absolute bottom-0 h-[2px] bg-[#5a9bd0] ' + (active ? 'w-full' : 'w-[39px]')} />}
    </div>
  );
}

function Taskbar() {
  return (
    <div className="flex h-10 items-center bg-[#1c1e20] text-white">
      <div className="flex w-[47px] justify-center">
        <FaWindows className="size-[17px]" />
      </div>
      <div className="flex h-10 w-[345px] items-center border border-[#5b5b5b] bg-[#333333] pl-[12px]">
        <svg viewBox="0 0 17 17" className="size-[17px]" fill="none" stroke="#e6e6e6" strokeWidth="1.3">
          <circle cx="10.5" cy="6.5" r="5.2" />
          <path d="M6.8 10.3L1 16" />
        </svg>
        <span className="ml-[11px] text-[15px] tracking-[-0.5px] text-[#d0d0d0]">Type here to search</span>
      </div>
      <TaskButton>
        <i className="size-[16px] rounded-full border-2 border-white" />
      </TaskButton>
      <TaskButton>
        <svg viewBox="0 0 17 16" className="mr-[2px] h-[16px] w-[17px]" fill="none" stroke="#fff" strokeWidth="1.3">
          <path d="M1 0v2.500h10V0M1 5h10v6H1zM1 16v-2.500h10V16M15 0v3M15 7v9" />
          <path d="M13.500 4.500h3v2h-3z" fill="#fff" stroke="none" />
        </svg>
      </TaskButton>
      <TaskButton>
        <svg viewBox="0 0 24 24" className="size-[25px]">
          <defs>
            <linearGradient id="edgeTop" x1="0" y1="0" x2="1" y2="0.3">
              <stop offset="0" stopColor="#35c1f1" />
              <stop offset="1" stopColor="#5bd34a" />
            </linearGradient>
          </defs>
          <path d="M1 10C2 4 7 .5 12 .5c7 0 11.500 4.500 11.500 9.500 0 4-3 6-6 6-2.500 0-3.500-1-3.500-2 0-.8 1-1.200 1-3 0-2-2-4.500-6-4.500-4 0-6.500 2-8 3.500z" fill="url(#edgeTop)" />
          <path d="M1 10c1.500-2 4.500-3.500 8-3.500 3 0 5 1.200 5.700 3C11 8.500 8.500 11 8.500 14c0 5 5 7.500 9 7 1.500-.2 3-.8 4.500-1.800C20 22 16.500 23.500 12.500 23.500 5 23.500 0 17 1 10z" fill="#1277c9" />
        </svg>
      </TaskButton>
      <TaskButton>
        <svg viewBox="0 0 25 22" className="h-[22px] w-[25px]">
          <path d="M0 8L12.500 0 25 8v6H0z" fill="#1668b5" />
          <path d="M0 8h25v14H0z" fill="#2da7ea" />
          <path d="M25 8v14H8z" fill="#3fc4f5" />
          <path d="M3 8h19l-9.500 8z" fill="#fff" />
        </svg>
      </TaskButton>
      <TaskButton>
        <FaDropbox className="size-[25px]" />
      </TaskButton>
      <TaskButton>
        <svg viewBox="0 0 12 22" className="h-[22px] w-[12px]">
          <path d="M9.500 0L1 7c-1 1-1 3 .5 4.500L6 15.500 1.500 22l9-7.500c1-1.200 1-3-.5-4.300L5.500 6.500z" fill="#fff" />
        </svg>
      </TaskButton>
      <TaskButton open>
        <svg viewBox="0 0 22 19" className="h-[19px] w-[22px]">
          <path d="M0 1.500C0 .5.500 0 1.500 0H9l2 2.500h11V17H0z" fill="#e5a50a" />
          <path d="M0 4h22v13.500H0z" fill="#ffd966" />
          <path d="M4 19v-6.500c0-1 .5-1.500 1.500-1.500h11c1 0 1.500.5 1.500 1.500V19h-4v-4H8v4z" fill="#3a9ae0" />
        </svg>
      </TaskButton>
      <TaskButton open active>
        <svg viewBox="0 0 26 26" className="ml-[3px] size-[26px]">
          <path d="M12 12v10.500A10.500 10.500 0 0 0 21.100 6.800z" fill="#fbbc04" />
          <path d="M12 12v10.500A10.500 10.500 0 0 1 2.900 6.800z" fill="#34a853" />
          <path d="M12 12L2.900 6.700A10.500 10.500 0 0 1 21.200 7z" fill="#ea4335" />
          <circle cx="12" cy="12" r="5" fill="#fff" />
          <circle cx="12" cy="12" r="3.900" fill="#4285f4" />
          <circle cx="18" cy="18" r="7.500" fill="#f4511e" />
          <text x="18" y="21.300" fontSize="9" textAnchor="middle" fill="#fff" fontFamily="Roboto">
            C
          </text>
        </svg>
      </TaskButton>
      <TaskButton>
        <svg viewBox="0 0 36 30" className="ml-[5px] h-[30px] w-[36px]">
          <path d="M2 13l3.500-3.500 6.500 6.500-3.500 3.500z" fill="#1e5fb0" />
          <path d="M8.500 19.500L21 5l4 3.500-13 14.500z" fill="#3d8ef0" />
          <circle cx="27" cy="21" r="8" fill="#2a2c2e" stroke="#9a9a9a" strokeWidth="1.200" />
          <text x="27" y="25" fontSize="11.500" textAnchor="middle" fill="#fff" fontFamily="Open Sans">
            1
          </text>
        </svg>
      </TaskButton>
      <TaskButton open>
        <svg viewBox="0 0 24 24" className="size-[24px]">
          <path d="M17 .5L.5 15 2.500 17 17 7z" fill="#1e97e0" />
          <path d="M17 17L2.500 7 .5 9 17 23.500z" fill="#0b6ab0" />
          <path d="M17 .5l6 2.800v17.400l-6 2.800z" fill="#2aa7f3" />
        </svg>
      </TaskButton>
      <TaskButton open>
        <FaSpotify className="size-[24px] text-[#1ed760]" />
      </TaskButton>

      <div className="ml-auto flex h-10 items-center pr-1 text-[12px]">
        <svg viewBox="0 0 24 22" className="h-[22px] w-[24px]">
          <circle cx="11" cy="11" r="10.500" fill="#fff" />
          <circle cx="11" cy="11" r="8.800" fill="#1e9bd7" />
          <text x="11" y="16.500" fontSize="15" fontWeight="700" textAnchor="middle" fill="#fff" fontFamily="Open Sans">
            ?
          </text>
          <circle cx="18.500" cy="16.500" r="5" fill="#f0a020" />
          <path d="M18.500 14v5" stroke="#fff" strokeWidth="1.500" />
        </svg>
        <svg viewBox="0 0 12 7" className="ml-[9px] h-[7px] w-[12px]">
          <path d="M.5 6.500L6 1l5.500 5.500" stroke="#fff" strokeWidth="1.200" fill="none" />
        </svg>
        <svg viewBox="0 0 12 16" className="ml-[12px] h-[16px] w-[12px]">
          <rect width="12" height="16" rx="5" fill="#0a7cf0" />
          <path d="M3.500 5.500l5 5L6 13V3l2.500 2.500-5 5" stroke="#fff" fill="none" />
        </svg>
        <svg viewBox="0 0 18 16" className="ml-[9px] h-[16px] w-[18px]">
          <path d="M1 10c0-3 2-4 4-4 1-3 3-4 5-3.500 3 .5 4 3 4 5v4H3c-1 0-2-.5-2-1.500z" fill="#a8a8a8" />
          <circle cx="12.500" cy="10.500" r="4.500" fill="#1d7fd6" stroke="#fff" />
          <path d="M10.500 10a2 2 0 0 1 3.500-1M14.500 11a2 2 0 0 1-3.500 1" stroke="#fff" fill="none" />
        </svg>
        <svg viewBox="0 0 17 12" className="ml-[7px] h-[12px] w-[17px]" fill="none" stroke="#fff">
          <path d="M4.500 5.500V10h10V3H7M15.500 5v3" />
          <path d="M7 4.500h6v4H6z" fill="#fff" stroke="none" />
          <path d="M1 0v2M4 0v2M.5 2.500h4v2l-2 1zM2.500 5v4h2" />
        </svg>
        <svg viewBox="0 0 14 13" className="ml-[9px] h-[13px] w-[14px]" fill="none" stroke="#fff" strokeWidth="1.1">
          <path d="M1 12A11.500 11.500 0 0 1 13 1M4 12a8.500 8.500 0 0 1 9-7.500M7 12a5.500 5.500 0 0 1 6-4.500" />
          <circle cx="12" cy="11" r="1.300" fill="#fff" stroke="none" />
        </svg>
        <svg viewBox="0 0 17 13" className="ml-[9px] h-[13px] w-[17px]" fill="none" stroke="#fff" strokeWidth="1.1">
          <path d="M.5 4.500h2.500l3-3.500v11L3 8.500H.5zM8.500 4q1.500 2.500 0 5M11 2.500q2.700 4 0 8M13.500 1q3.700 5.500 0 11" />
        </svg>
        <span className="ml-[8px] tracking-[-0.6px]">ENG</span>
        <div className="ml-[14px] w-[58px] text-center leading-[18px]">
          <div className="tracking-[-0.47px]">10:08 PM</div>
          <div className="tracking-[-0.56px]">16-06-2022</div>
        </div>
        <svg viewBox="0 0 17 17" className="ml-[18px] h-[17px] w-[17px]">
          <path d="M.5 1h16v11.500h-5.500l-2.500 3-2.500-3H.5z" fill="none" stroke="#fff" strokeWidth="1.200" />
        </svg>
        <i className="ml-[19px] h-10 w-px bg-[#6b6d6f]" />
      </div>
    </div>
  );
}

export default function App() {
  return (
    <div className="h-[1080px] w-[1920px] overflow-hidden bg-[#f7f6f2] font-['Open_Sans','Noto_Sans',sans-serif]">
      <TabStrip />
      <Toolbar />
      <BookmarkBar />
      <Page />
      <Taskbar />
    </div>
  );
}
